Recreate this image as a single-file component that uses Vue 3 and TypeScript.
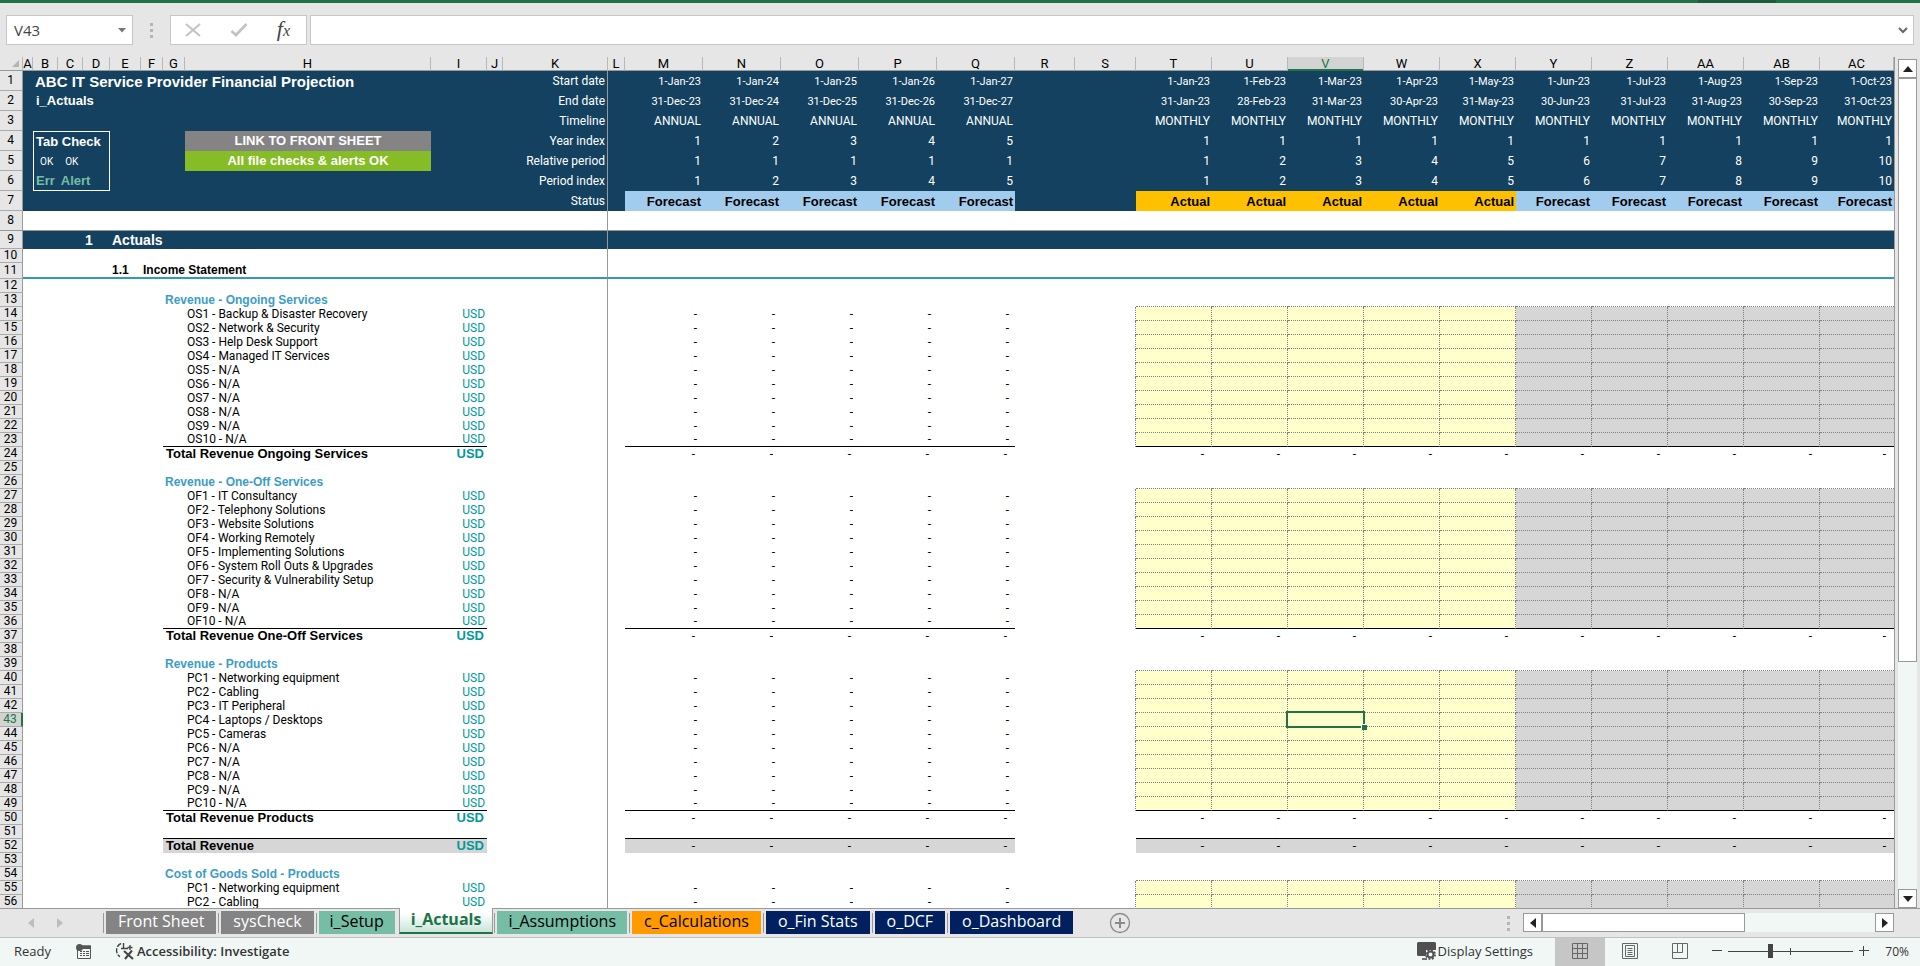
<script setup lang="ts">
import { ref } from 'vue'

interface Cell {
  text?: string
  span?: number
  rows?: number
  cls?: string
  kind?: 'check' | 'link' | 'selected'
}

interface Row {
  n: number
  cls: string
  cells: Cell[]
}

const columns = [
  ['A', 'a'], ['B', 'b'], ['C', 'b'], ['D', 'd'], ['E', 'e'], ['F', 'f'], ['G', 'f'],
  ['H', 'h'], ['I', 'i'], ['J', 'j'], ['K', 'k'], ['L', 'l'],
  ['M', 'year'], ['N', 'year'], ['O', 'year'], ['P', 'year'], ['Q', 'year'],
  ['R', 'r'], ['S', 's'],
  ['T', 'month'], ['U', 'month'], ['V', 'month'], ['W', 'month'], ['X', 'month'],
  ['Y', 'month'], ['Z', 'month'], ['AA', 'month'], ['AB', 'month'], ['AC', 'rest'],
]

const years = [0, 1, 2, 3, 4]
const months = [
  ['Jan', 31], ['Feb', 28], ['Mar', 31], ['Apr', 30], ['May', 31],
  ['Jun', 30], ['Jul', 31], ['Aug', 31], ['Sep', 30], ['Oct', 31],
] as const

const timeline: { label: string; year: (i: number) => string; month: (i: number) => string }[] = [
  { label: 'Start date', year: i => `1-Jan-${23 + i}`, month: i => `1-${months[i][0]}-23` },
  { label: 'End date', year: i => `31-Dec-${23 + i}`, month: i => `${months[i][1]}-${months[i][0]}-23` },
  { label: 'Timeline', year: () => 'ANNUAL', month: () => 'MONTHLY' },
  { label: 'Year index', year: i => `${i + 1}`, month: () => '1' },
  { label: 'Relative period', year: () => '1', month: i => `${i + 1}` },
  { label: 'Period index', year: i => `${i + 1}`, month: i => `${i + 1}` },
  { label: 'Status', year: () => 'Forecast', month: i => (i < 5 ? 'Actual' : 'Forecast') },
]

const headLeft: Cell[][] = [
  [{}, { text: 'ABC IT Service Provider Financial Projection', span: 9, cls: 'title' }],
  [{}, { text: 'i_Actuals', span: 9, cls: 'bold' }],
  [{ span: 10 }],
  [{}, { span: 3, rows: 3, kind: 'check' }, { span: 3 }, { text: 'LINK TO FRONT SHEET', kind: 'link', cls: 'grey' }, { span: 2 }],
  [{}, { span: 3 }, { text: 'All file checks & alerts OK', kind: 'link', cls: 'green' }, { span: 2 }],
  [{}, { span: 6 }],
  [{ span: 10 }],
]

const labels: Record<number, string> = {}
function block(start: number, heading: string, prefix: string, names: string[], count: number, total = '') {
  labels[start] = heading
  for (let i = 0; i < count; i++) labels[start + 1 + i] = `${prefix}${i + 1} - ${names[i] ?? 'N/A'}`
  if (total) labels[start + 1 + count] = total
}
const products = ['Networking equipment', 'Cabling', 'IT Peripheral', 'Laptops / Desktops', 'Cameras']
block(13, 'Revenue - Ongoing Services', 'OS',
  ['Backup & Disaster Recovery', 'Network & Security', 'Help Desk Support', 'Managed IT Services'],
  10, 'Total Revenue Ongoing Services')
block(26, 'Revenue - One-Off Services', 'OF',
  ['IT Consultancy', 'Telephony Solutions', 'Website Solutions', 'Working Remotely', 'Implementing Solutions',
    'System Roll Outs & Upgrades', 'Security & Vulnerability Setup'],
  10, 'Total Revenue One-Off Services')
block(39, 'Revenue - Products', 'PC', products, 10, 'Total Revenue Products')
labels[52] = 'Total Revenue'
block(54, 'Cost of Goods Sold - Products', 'PC', products, 2)

const headings = [13, 26, 39, 54]
const totals = [24, 37, 50, 52]

function headRow(i: number): Row {
  const line = timeline[i]
  const size = i < 2 ? 'date' : i === 6 ? 'status' : ''
  const tone = (text: string) => (i === 6 ? (text === 'Actual' ? 'actual' : 'forecast') : '')
  return {
    n: i + 1,
    cls: 'tall navy',
    cells: [
      ...headLeft[i],
      { text: line.label, cls: 'num freeze' },
      {},
      ...years.map(y => ({ text: line.year(y), cls: `num ${size} ${tone(line.year(y))}` })),
      { span: 2 },
      ...months.map((_, m) => ({ text: line.month(m), cls: `num ${size} ${tone(line.month(m))}` })),
    ],
  }
}

function bodyRow(n: number): Row {
  if (n === 8) return { n, cls: 'tall frozen', cells: [{ span: 11, cls: 'freeze' }, { span: 18 }] }
  if (n === 9) {
    return {
      n, cls: 'section navy',
      cells: [{ span: 3 }, { text: '1', cls: 'h1' }, { text: 'Actuals', span: 4, cls: 'h1' }, { span: 3, cls: 'freeze' }, { span: 18 }],
    }
  }
  if (n === 11) {
    return {
      n, cls: 'subsection',
      cells: [{ span: 4 }, { text: '1.1', cls: 'h2' }, { text: 'Income Statement', span: 3, cls: 'h2' }, { span: 3, cls: 'freeze' }, { span: 18 }],
    }
  }
  const label = labels[n]
  const heading = headings.includes(n)
  const total = totals.includes(n)
  const item = !!label && !heading && !total
  const rule = totals.includes(n + 1) ? 'rule' : ''
  const grid = !rule && (headings.includes(n) || item) ? 'dotted' : ''
  const fill = n === 52 ? 'shade' : ''
  const cells: Cell[] = [{ span: 6 }]
  if (item) cells.push({ cls: rule }, { text: label, cls: rule })
  else cells.push({ text: label, span: 2, cls: `${heading ? 'heading' : 'bold'} ${rule} ${fill}` })
  const unit = item || total ? 'USD' : ''
  cells.push({ text: unit, cls: `num usd ${total ? 'bold' : ''} ${rule} ${fill}` }, {}, { cls: 'freeze' }, {})
  const dash = item || total ? '-' : ''
  for (let i = 0; i < 5; i++) cells.push({ text: dash, cls: `dash ${total ? 'sum' : ''} ${rule} ${fill}` })
  cells.push({}, { cls: item ? 'side' : '' })
  for (let i = 0; i < 10; i++) {
    const tone = item ? (i < 5 ? 'entry' : 'closed') : ''
    const side = item && i < 9 ? 'side' : ''
    cells.push({
      text: total ? '-' : '',
      cls: `dash sum ${rule} ${grid} ${fill} ${tone} ${side}`,
      kind: n === 43 && i === 2 ? 'selected' : undefined,
    })
  }
  const cls = n === 43 ? 'line current' : 'line'
  return { n, cls, cells }
}

const rows: Row[] = [
  ...timeline.map((_, i) => headRow(i)),
  ...Array.from({ length: 49 }, (_, i) => bodyRow(i + 8)),
]

const tabs = [
  { name: 'Front Sheet', cls: 'slate' },
  { name: 'sysCheck', cls: 'slate' },
  { name: 'i_Setup', cls: 'mint' },
  { name: 'i_Actuals', cls: 'active' },
  { name: 'i_Assumptions', cls: 'mint' },
  { name: 'c_Calculations', cls: 'orange' },
  { name: 'o_Fin Stats', cls: 'deep' },
  { name: 'o_DCF', cls: 'deep' },
  { name: 'o_Dashboard', cls: 'deep' },
]

const cellName = ref('V43')
const formula = ref('')
const zoom = ref(33)
</script>

<template>
  <div class="app">
    <div class="ribbon-edge"><span class="ribbon-notch"></span></div>

    <header class="formula-bar">
      <div class="name-box">
        <input v-model="cellName" aria-label="Name box" />
        <button aria-label="Open name list">
          <svg width="8" height="5" viewBox="0 0 8 5"><path d="M0 0h8L4 4.5z" fill="#777" /></svg>
        </button>
      </div>
      <span class="grip"><i></i><i></i><i></i></span>
      <div class="formula-tools">
        <button aria-label="Cancel">
          <svg width="16" height="14" viewBox="0 0 16 14"><path d="M1 1l14 12M15 1L1 13" stroke="#c3c3c3" stroke-width="2" fill="none" /></svg>
        </button>
        <button aria-label="Enter">
          <svg width="18" height="14" viewBox="0 0 18 14"><path d="M1.500 8l4.500 4L16.500 1" stroke="#c3c3c3" stroke-width="2.800" fill="none" /></svg>
        </button>
        <button class="fx" aria-label="Insert function"><span>f</span><small>x</small></button>
      </div>
      <div class="formula-box">
        <input v-model="formula" aria-label="Formula" />
        <button aria-label="Expand formula bar">
          <svg width="10" height="7" viewBox="0 0 10 7"><path d="M1 1l4 4 4-4" stroke="#666" stroke-width="2" fill="none" /></svg>
        </button>
      </div>
    </header>

    <main class="workspace">
      <div class="sheet">
        <table>
          <colgroup>
            <col class="w-head" />
            <col v-for="c in columns" :key="c[0]" :class="'w-' + c[1]" />
          </colgroup>
          <thead>
            <tr>
              <th class="corner"><svg width="7" height="7" viewBox="0 0 7 7"><path d="M7 0v7H0z" fill="#b4b4b4" /></svg></th>
              <th v-for="c in columns" :key="c[0]" scope="col" :class="{ current: c[0] === 'V' }">{{ c[0] }}</th>
            </tr>
          </thead>
          <tbody>
            <tr v-for="row in rows" :key="row.n" :class="row.cls">
              <th scope="row">{{ row.n }}</th>
              <td v-for="(cell, i) in row.cells" :key="i" :colspan="cell.span" :rowspan="cell.rows" :class="[cell.kind, cell.kind === 'link' ? '' : cell.cls]">
                <div v-if="cell.kind === 'check'" class="tab-check">
                  <strong>Tab Check</strong>
                  <p class="oks"><span>OK</span><span>OK</span></p>
                  <p class="flags"><span>Err</span><span>Alert</span></p>
                </div>
                <a v-else-if="cell.kind === 'link'" href="#" :class="cell.cls">{{ cell.text }}</a>
                <span v-else-if="cell.kind === 'selected'" class="cursor"><i></i></span>
                <template v-else>{{ cell.text }}</template>
              </td>
            </tr>
          </tbody>
        </table>
      </div>
      <div class="vscroll">
        <button aria-label="Scroll up"><svg width="10" height="6" viewBox="0 0 10 6"><path d="M5 0l5 6H0z" fill="#222" /></svg></button>
        <div class="track"><div class="thumb"></div></div>
        <button aria-label="Scroll down"><svg width="10" height="6" viewBox="0 0 10 6"><path d="M5 6l5-6H0z" fill="#222" /></svg></button>
      </div>
    </main>

    <nav class="tab-bar">
      <div class="tab-arrows">
        <button aria-label="Previous sheet"><svg width="6" height="10" viewBox="0 0 6 10"><path d="M6 0v10L0 5z" fill="#bdbdbd" /></svg></button>
        <button aria-label="Next sheet"><svg width="6" height="10" viewBox="0 0 6 10"><path d="M0 0v10l6-5z" fill="#bdbdbd" /></svg></button>
      </div>
      <div class="tabs">
        <button v-for="t in tabs" :key="t.name" class="tab" :class="t.cls">{{ t.name }}</button>
      </div>
      <button class="add" aria-label="New sheet">
        <svg width="22" height="22" viewBox="0 0 22 22" fill="none" stroke="#8a8a8a">
          <circle cx="11" cy="11" r="9.500" stroke-width="1.300" />
          <path d="M11 6v10M6 11h10" stroke-width="2" />
        </svg>
      </button>
      <span class="grip end"><i></i><i></i><i></i></span>
      <div class="hscroll">
        <button aria-label="Scroll left"><svg width="6" height="10" viewBox="0 0 6 10"><path d="M6 0v10L0 5z" fill="#222" /></svg></button>
        <div class="track"><div class="thumb"></div></div>
        <button aria-label="Scroll right"><svg width="6" height="10" viewBox="0 0 6 10"><path d="M0 0v10l6-5z" fill="#222" /></svg></button>
      </div>
    </nav>

    <footer class="status-bar">
      <span class="ready">Ready</span>
      <button class="macro" aria-label="Record macro">
        <svg width="16" height="15" viewBox="0 0 16 15">
          <path d="M1.500 5v9.500h13V2H6" fill="none" stroke="#555" />
          <path d="M6 1.500h9V5H4z" fill="#555" />
          <circle cx="3.500" cy="3.500" r="3.500" fill="#555" />
          <path d="M4 7.500h2M7 7.500h2M10 7.500h3M4 9.500h2M7 9.500h2M10 9.500h3M4 11.500h2M7 11.500h2M10 11.500h3" stroke="#555" />
        </svg>
      </button>
      <button class="access">
        <svg width="20" height="18" viewBox="0 0 20 18" fill="none" stroke="#444" stroke-width="1.400">
          <path d="M6 1.500C.500 3.500 0 12 5 14.500" stroke-dasharray="5 1.500" />
          <path d="M8.500 1v5M6 6.500h7M15 3v5M12.500 5.500h5" />
          <path d="M9 9l9 8M17 8.500L10 17" stroke-width="2" />
        </svg>
        Accessibility: Investigate
      </button>
      <button class="display">
        <svg width="19" height="18" viewBox="0 0 19 18">
          <path d="M1.500 0h16A1.500 1.500 0 0 1 19 1.500V8H9v6H1.500A1.500 1.500 0 0 1 0 12.500v-11A1.500 1.500 0 0 1 1.500 0z" fill="#505050" />
          <path d="M5 17h5" stroke="#505050" stroke-width="1.600" />
          <circle cx="13.500" cy="12.500" r="3" fill="none" stroke="#505050" stroke-width="2" />
          <circle cx="13.500" cy="12.500" r="4.600" fill="none" stroke="#505050" stroke-width="1.600" stroke-dasharray="2 1.600" />
        </svg>
        Display Settings
      </button>
      <button class="view on" aria-label="Normal view">
        <svg width="16" height="16" viewBox="0 0 16 16" fill="none" stroke="#666"><path d="M.5.5h15v15H.500zM5.500.500v15M10.500.500v15M.500 5.500h15M.500 10.500h15" /></svg>
      </button>
      <button class="view" aria-label="Page layout view">
        <svg width="16" height="16" viewBox="0 0 16 16" fill="none" stroke="#666"><path d="M.5.5h15v15H.500zM3.500 2.500h9v11h-9zM5.500 5.500h5M5.500 7.500h5M5.500 9.500h5M5.500 11.500h5" /></svg>
      </button>
      <button class="view" aria-label="Page break view">
        <svg width="16" height="16" viewBox="0 0 16 16" fill="none" stroke="#666"><path d="M.5.5h15v15H.500zM5.500.500v9M.500 9.500h10M10.500.500v9" /></svg>
      </button>
      <div class="zoom">
        <button aria-label="Zoom out"><svg width="10" height="10" viewBox="0 0 10 10"><path d="M0 4.500h10" stroke="#444" /></svg></button>
        <input v-model="zoom" type="range" min="0" max="100" aria-label="Zoom level" />
        <button aria-label="Zoom in"><svg width="10" height="10" viewBox="0 0 10 10"><path d="M0 4.500h10M4.500 0v10" stroke="#444" /></svg></button>
      </div>
      <span class="percent">70%</span>
    </footer>
  </div>
</template>

<style>
body {
  margin: 0;
}
</style>

<style scoped>
.app {
  display: flex;
  flex-direction: column;
  height: 100vh;
  overflow: hidden;
  background: #e6e6e6;
  color: #000;
  font-family: "Open Sans", "Noto Sans", sans-serif;
}
.app * {
  box-sizing: border-box;
}
button {
  display: flex;
  align-items: center;
  justify-content: center;
  padding: 0;
  border: 0;
  background: none;
  color: inherit;
  font: inherit;
}
input {
  min-width: 0;
  padding: 0;
  border: 0;
  outline: 0;
  background: none;
  font: inherit;
}
svg {
  display: block;
  flex: none;
}

/* Formula bar */
.ribbon-edge {
  display: flex;
  flex: none;
  justify-content: flex-end;
  height: 3px;
  padding-right: 144px;
  background: #217346;
}
.ribbon-notch {
  width: 78px;
  background: #1e5c3b;
}
.formula-bar {
  display: flex;
  flex: none;
  height: 54px;
  padding: 12px 6px 12px;
}
.name-box,
.formula-tools,
.formula-box {
  display: flex;
  align-items: center;
  border: 1px solid #c6c6c6;
  background: #fff;
}
.name-box {
  width: 127px;
  padding: 0 6px 0 7px;
  color: #444;
  font-size: 15px;
}
.name-box input {
  flex: 1;
  color: #444;
}
.grip {
  display: flex;
  flex-direction: column;
  align-items: center;
  justify-content: center;
  gap: 3px;
  width: 37px;
}
.grip i {
  width: 3px;
  height: 3px;
  background: #b5b5b5;
}
.formula-tools {
  width: 137px;
  justify-content: space-between;
  padding: 0 16px 0 14px;
}
.fx {
  align-items: baseline;
  color: #444;
  font-family: "Liberation Serif", serif;
  font-style: italic;
  font-size: 22px;
  line-height: 24px;
}
.fx small {
  font-size: 16px;
}
.formula-box {
  flex: 1;
  margin-left: 3px;
  padding: 0 5px 0 8px;
}
.formula-box input {
  flex: 1;
  font-size: 15px;
}

/* Sheet */
.workspace {
  display: flex;
  flex: 1;
  min-height: 0;
}
.sheet {
  flex: 1;
  min-width: 0;
  overflow: hidden;
  border-right: 1px solid #999;
  background: #fff;
}
table {
  width: 100%;
  table-layout: fixed;
  border-collapse: separate;
  border-spacing: 0;
  font-family: Roboto, "Liberation Sans", sans-serif;
  font-size: 12px;
  line-height: 13px;
}
.w-head { width: 23px; }
.w-a { width: 10px; }
.w-b { width: 25px; }
.w-d { width: 27px; }
.w-e { width: 31px; }
.w-f { width: 22px; }
.w-h { width: 246px; }
.w-i { width: 56px; }
.w-j { width: 16px; }
.w-k { width: 105px; }
.w-l { width: 17px; }
.w-year { width: 78px; }
.w-r { width: 60px; }
.w-s { width: 61px; }
.w-month { width: 76px; }
th,
td {
  padding: 0 2px;
  text-align: left;
  vertical-align: middle;
  white-space: nowrap;
}
thead th {
  height: 14px;
  padding: 0;
  border-right: 1px solid #b8b8b8;
  border-bottom: 1px solid #999;
  background: #e6e6e6;
  font-size: 13px;
  font-weight: 400;
  text-align: center;
}
thead .corner svg {
  margin-left: 12px;
}
thead th.current {
  border-bottom-color: #217346;
  background: #d3d3d3;
  box-shadow: inset 0 -1px #217346;
  color: #217346;
}
tbody th {
  padding: 0 1px 0 0;
  border-right: 1px solid #999;
  border-bottom: 1px solid #ababab;
  background: #e6e6e6;
  font-weight: 400;
  text-align: center;
}
.current th {
  border-right: 2px solid #217346;
  background: #d3d3d3;
  color: #217346;
}
.line {
  height: 14px;
}
.tall {
  height: 20px;
}
.section {
  height: 18px;
}
.subsection {
  height: 16px;
}
.navy td {
  background: #144160;
  color: #fff;
}
.frozen td,
.frozen th {
  border-bottom: 1px solid #999;
}
.subsection td {
  border-bottom: 2px solid #3299ba;
}
td.freeze {
  border-right: 1px solid #999;
}
td.num {
  text-align: right;
}
td.date {
  font-size: 11px;
}
td.bold,
td.title,
td.status,
td.h1,
td.h2,
td.heading {
  font-family: "Liberation Sans", Arial, sans-serif;
  font-weight: 700;
}
td.bold {
  padding: 0 3px;
  font-size: 13px;
  line-height: 12px;
}
td.status {
  font-size: 13px;
}
td.title {
  font-size: 15px;
}
td.h1 {
  font-size: 14px;
}
td.heading {
  color: #3c9cc6;
}
td.usd {
  color: #009999;
}
.navy td.forecast {
  background: #a2ccee;
  color: #000;
}
.navy td.actual {
  background: #ffc000;
  color: #000;
}
td.dash {
  padding-right: 6px;
  text-align: right;
}
td.dash.sum {
  padding-right: 8px;
}
td.entry {
  background: #ffffcc;
}
td.closed,
td.shade {
  background: #d6d6d6;
}
td.dotted {
  border-bottom: 1px dotted #808080;
}
td.side {
  border-right: 1px dotted #808080;
}
td.rule {
  border-bottom: 1px solid #000;
}
td.check {
  padding: 0;
}
.tab-check {
  height: 60px;
  border: 1px solid #fff;
  font-family: "Liberation Sans", Arial, sans-serif;
  font-size: 13px;
  line-height: 20px;
}
.tab-check strong {
  display: block;
  padding-left: 2px;
}
.tab-check p {
  display: flex;
  margin: 0;
}
.oks {
  gap: 12px;
  padding-left: 6px;
  font-family: Roboto, sans-serif;
  font-size: 10px;
}
.flags {
  gap: 6px;
  padding-left: 2px;
  color: #76bda5;
  font-weight: 700;
  font-size: 13px;
  line-height: 18px;
}
td.link {
  padding: 0;
}
td.link a {
  display: block;
  color: #fff;
  font-family: "Liberation Sans", Arial, sans-serif;
  font-size: 13px;
  font-weight: 700;
  line-height: 20px;
  text-align: center;
  text-decoration: none;
}
a.grey {
  background: #848484;
}
a.green {
  background: #86bc25;
}
td.selected {
  position: relative;
}
.cursor {
  position: absolute;
  inset: -2px -2px -2px -2px;
  border: 2px solid #217346;
}
.cursor i {
  position: absolute;
  right: -4px;
  bottom: -4px;
  width: 6px;
  height: 6px;
  border: 1px solid #fff;
  border-right: 0;
  border-bottom: 0;
  background: #217346;
}

/* Scroll bars */
.vscroll {
  display: flex;
  flex: none;
  flex-direction: column;
  width: 19px;
  margin: 2px 3px 0 3px;
}
.vscroll button,
.hscroll button {
  flex: none;
  width: 19px;
  height: 19px;
  border: 1px solid #999;
  background: #fff;
}
.track {
  flex: 1;
  background: #f1f7f5;
}
.vscroll .thumb {
  height: 72%;
  border: 1px solid #999;
  background: #fff;
}
.hscroll {
  display: flex;
  align-items: center;
  width: 371px;
  height: 19px;
}
.hscroll .track,
.hscroll .thumb {
  height: 19px;
}
.hscroll .thumb {
  width: 61%;
  border: 1px solid #999;
  background: #fff;
}

/* Sheet tabs */
.tab-bar {
  display: flex;
  flex: none;
  height: 30px;
  padding-right: 26px;
  border-top: 1px solid #999;
  border-bottom: 1px solid #c2c2c2;
}
.tab-arrows {
  display: flex;
  gap: 23px;
  width: 105px;
  padding-left: 28px;
}
.tabs {
  display: flex;
  gap: 3px;
  padding-top: 2px;
}
.tab {
  position: relative;
  height: 23px;
  padding: 0 12px 4px;
  border-left: 1px solid #e6e6e6;
  border-right: 1px solid #e6e6e6;
  background-clip: padding-box;
  font-size: 16px;
  line-height: 18px;
}
.tab::before {
  content: "";
  position: absolute;
  left: -3px;
  top: 2px;
  bottom: 1px;
  width: 1px;
  background: #999;
}
.slate {
  background-color: #848484;
  color: #fff;
}
.mint {
  padding: 0 11px 4px;
  background-color: #76bda5;
}
.orange {
  background-color: #ff9900;
}
.deep {
  background-color: #002060;
  color: #fff;
}
.tab.active {
  height: 26px;
  margin-top: -3px;
  padding: 0 11px 2px;
  border-color: #999;
  border-bottom: 2px solid #217346;
  background: linear-gradient(#fff 20%, #c8e5db);
  color: #217346;
  font-weight: 700;
}
.tab.active::before {
  display: none;
}
.add {
  width: 22px;
  margin-left: 35px;
}
.grip.end {
  width: 9px;
  margin-left: auto;
}
.tab-bar .hscroll {
  margin: 4px 0 0 10px;
}

/* Status bar */
.status-bar {
  display: flex;
  flex: none;
  align-items: center;
  height: 28px;
  padding: 0 11px 2px 0;
  background: #f1f7f5;
  color: #333;
  font-size: 13px;
}
.ready {
  width: 62px;
  padding-left: 14px;
}
.macro {
  justify-content: flex-start;
  width: 44px;
  padding-left: 14px;
}
.access {
  gap: 2px;
  margin-left: 9px;
  font-weight: 600;
}
.display {
  gap: 2px;
  margin: 0 22px 0 auto;
}
.view {
  width: 50px;
  height: 26px;
}
.view.on {
  background: #c6c6c6;
  box-shadow: 0 2px #c6c6c6;
}
.zoom {
  display: flex;
  align-items: center;
  gap: 6px;
  margin-left: 7px;
}
.zoom input {
  width: 125px;
  height: 14px;
  margin: 0;
  appearance: none;
  background:
    linear-gradient(#444, #444) 62px 4px / 1px 7px no-repeat,
    linear-gradient(#444, #444) 0 7px / 100% 1px no-repeat;
}
.zoom input::-webkit-slider-thumb {
  appearance: none;
  width: 5px;
  height: 14px;
  background: #444;
}
.percent {
  width: 40px;
  font-size: 12px;
  text-align: right;
}
</style>
